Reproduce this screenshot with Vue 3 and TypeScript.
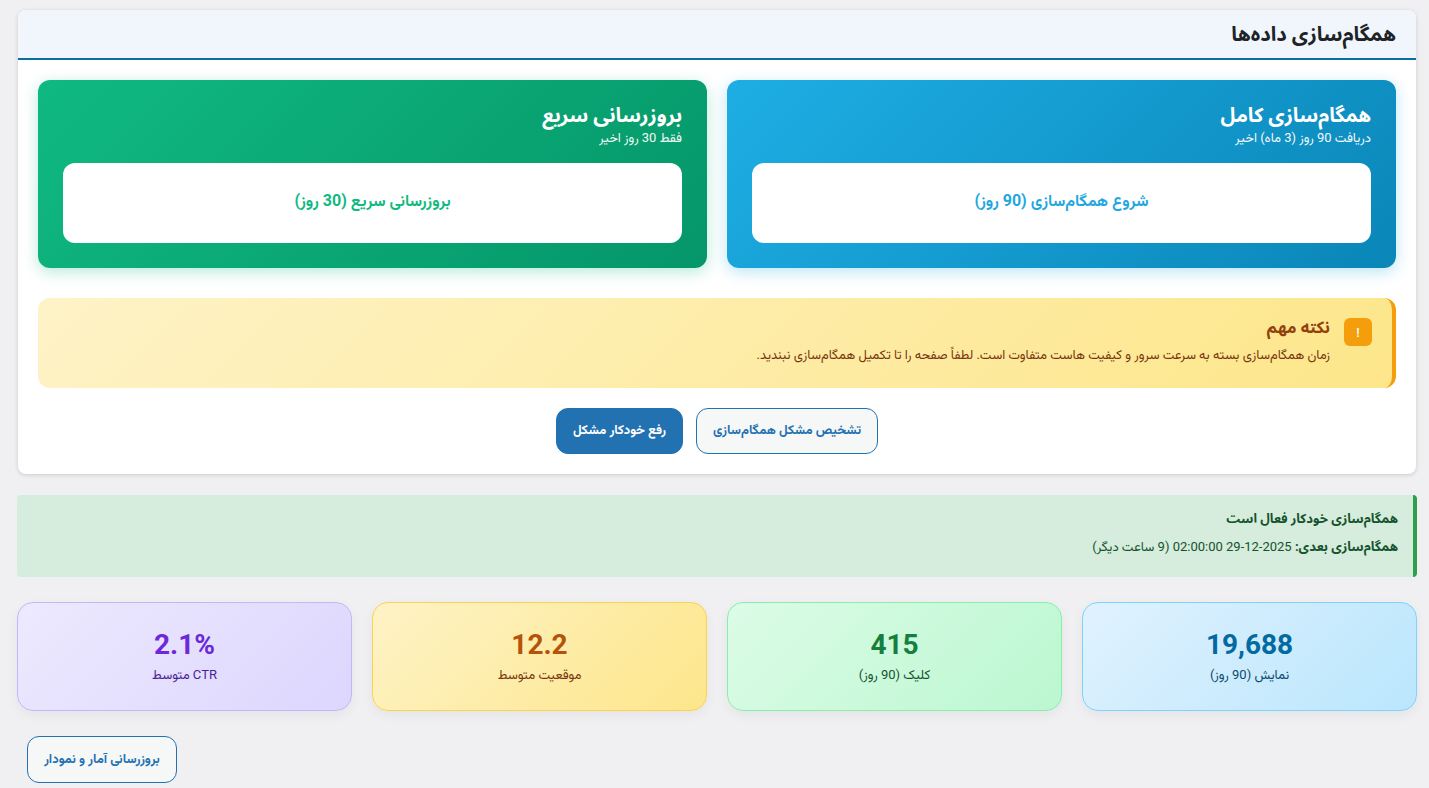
<script setup lang="ts">
interface Stat { value: string; label: string; kind: string }
const stats: Stat[] = [
  { value: '19,688', label: 'نمایش (90 روز)', kind: 'blue' },
  { value: '415', label: 'کلیک (90 روز)', kind: 'green' },
  { value: '12.2', label: 'موقعیت متوسط', kind: 'yellow' },
  { value: '2.1%', label: 'CTR متوسط', kind: 'purple' },
]
</script>

<template>
  <div class="page" dir="rtl">
    <section class="card">
      <header class="card-head"><h2>همگام‌سازی داده‌ها</h2></header>
      <div class="card-body">
        <div class="sync-grid">
          <div class="sync sync-blue">
            <h3>همگام‌سازی کامل</h3>
            <p>دریافت 90 روز (3 ماه) اخیر</p>
            <button class="sync-btn">شروع همگام‌سازی (90 روز)</button>
          </div>
          <div class="sync sync-green">
            <h3>بروزرسانی سریع</h3>
            <p>فقط 30 روز اخیر</p>
            <button class="sync-btn">بروزرسانی سریع (30 روز)</button>
          </div>
        </div>
        <div class="notice">
          <span class="notice-icon">!</span>
          <div>
            <h4>نکته مهم</h4>
            <p>زمان همگام‌سازی بسته به سرعت سرور و کیفیت هاست متفاوت است. لطفاً صفحه را تا تکمیل همگام‌سازی نبندید.</p>
          </div>
        </div>
        <div class="actions">
          <button class="btn btn-outline">تشخیص مشکل همگام‌سازی</button>
          <button class="btn btn-solid">رفع خودکار مشکل</button>
        </div>
      </div>
    </section>

    <div class="alert">
      <strong class="alert-title">همگام‌سازی خودکار فعال است</strong>
      <div class="alert-line"><strong>همگام‌سازی بعدی:</strong> 2025-12-29 02:00:00 (9 ساعت دیگر)</div>
    </div>

    <div class="stats">
      <div v-for="s in stats" :key="s.kind" class="stat" :class="'stat-' + s.kind">
        <div class="stat-value">{{ s.value }}</div>
        <div class="stat-label">{{ s.label }}</div>
      </div>
    </div>

    <div class="footer-row">
      <button class="btn btn-outline btn-wide">بروزرسانی آمار و نمودار</button>
    </div>
  </div>
</template>

<style>
html, body { margin: 0; background: #f0f0f2; overflow: hidden; }
</style>

<style scoped>
.page {
  box-sizing: border-box;
  width: 1429px;
  height: 788px;
  overflow: hidden;
  padding: 10px 12px 0 17px;
  font-family: Roboto, Vazirmatn, "DejaVu Sans Condensed", sans-serif;
  color: #1d2327;
}
h2, h3, h4, p { margin: 0; }
h2, h3, h4, strong { font-family: Roboto, "Noto Sans Arabic", "DejaVu Sans Condensed", sans-serif; }
button { font-family: inherit; cursor: pointer; white-space: nowrap; }
.card {
  margin: 0 1px;
  background: #fff;
  border-radius: 8px;
  overflow: hidden;
  box-shadow: 0 1px 4px rgba(0, 0, 0, .16);
}
.card-head {
  box-sizing: border-box;
  height: 50px;
  padding: 0 20px;
  display: flex;
  align-items: center;
  background: #f0f6fc;
  border-bottom: 2px solid #0a6fa1;
}
.card-head h2 { font-size: 20.3px; font-weight: 700; color: #1d2327; }
.card-body { padding: 20px; }
.sync-grid { display: grid; grid-template-columns: 1fr 1fr; gap: 20px; }
.sync {
  box-sizing: border-box;
  height: 188px;
  padding: 23px 25px 25px;
  border-radius: 12px;
  color: #fff;
}
.sync-blue { background: linear-gradient(135deg, #1eaee4, #0a86b8); box-shadow: 0 4px 15px rgba(30, 170, 230, .3); }
.sync-green { background: linear-gradient(135deg, #10b981, #059669); box-shadow: 0 4px 15px rgba(16, 185, 129, .3); }
.sync h3 { font-size: 20px; font-weight: 700; line-height: 25px; }
.sync p { font-size: 13px; line-height: 16px; margin: 2px 0 17px; opacity: .95; }
.sync-btn {
  display: block;
  width: 100%;
  height: 80px;
  padding: 0 0 2px;
  border: 0;
  border-radius: 12px;
  background: #fff;
  font-size: 16px;
  font-weight: 700;
}
.sync-blue .sync-btn { color: #1fa8e0; }
.sync-green .sync-btn { color: #10b981; }
.notice {
  box-sizing: border-box;
  height: 90px;
  margin-top: 30px;
  padding: 20px 20px;
  display: flex;
  gap: 14px;
  border-radius: 12px;
  border-right: 4px solid #f59e0b;
  background: linear-gradient(135deg, #fef3c7, #fde68a);
}
.notice-icon {
  flex: none;
  width: 28px;
  height: 28px;
  border-radius: 6px;
  background: #f59e0b;
  color: #fff;
  font-size: 13px;
  font-weight: 500;
  display: flex;
  align-items: center;
  justify-content: center;
}
.notice h4 { font-size: 16.4px; font-weight: 700; line-height: 20px; color: #92400e; }
.notice p { margin-top: 7px; font-size: 13px; line-height: 20px; color: #78350f; }
.actions { margin-top: 20px; display: flex; justify-content: center; gap: 13px; }
.btn {
  box-sizing: border-box;
  height: 46px;
  padding: 0 16px;
  border-radius: 12px;
  font-size: 13px;
  font-weight: 700;
}
.btn-outline { background: #f6f7f7; border: 1px solid #2271b1; color: #2271b1; }
.btn-solid { background: #2271b1; border: 1px solid #2271b1; color: #fff; }
.alert {
  box-sizing: border-box;
  height: 82px;
  margin-top: 21px;
  padding: 14px 15px;
  background: #d6ecdc;
  border-right: 4px solid #2f9e4f;
  border-radius: 4px;
  font-size: 13px;
  color: #14532d;
}
.alert-title { display: block; font-size: 13px; line-height: 20px; }
.alert-line { margin-top: 8px; line-height: 20px; }
.stats {
  margin-top: 25px;
  display: grid;
  grid-template-columns: repeat(4, 1fr);
  gap: 20px;
}
.stat {
  box-sizing: border-box;
  height: 109px;
  padding-top: 24px;
  border-radius: 16px;
  border: 1px solid;
  text-align: center;
  box-shadow: 0 4px 12px rgba(0, 0, 0, .05);
}
.stat-value { font-size: 28px; font-weight: 700; line-height: 36px; }
.stat-label { margin-top: 3px; font-size: 13px; line-height: 18px; }
.stat-blue { background: linear-gradient(135deg, #e0f2fe, #bae6fd); border-color: #7dd3fc; }
.stat-blue .stat-value { color: #0369a1; }
.stat-blue .stat-label { color: #0c4a6e; }
.stat-green { background: linear-gradient(135deg, #dcfce7, #bbf7d0); border-color: #86efac; }
.stat-green .stat-value { color: #15803d; }
.stat-green .stat-label { color: #14532d; }
.stat-yellow { background: linear-gradient(135deg, #fef3c7, #fde68a); border-color: #fcd34d; }
.stat-yellow .stat-value { color: #b45309; }
.stat-yellow .stat-label { color: #78350f; }
.stat-purple { background: linear-gradient(135deg, #ede9fe, #ddd6fe); border-color: #c4b5fd; }
.stat-purple .stat-value { color: #6d28d9; }
.stat-purple .stat-label { color: #4c1d95; }
.footer-row { margin-top: 25px; padding-left: 10px; display: flex; justify-content: flex-end; }
.btn-wide { width: 150px; height: 47px; padding: 0; }
</style>
